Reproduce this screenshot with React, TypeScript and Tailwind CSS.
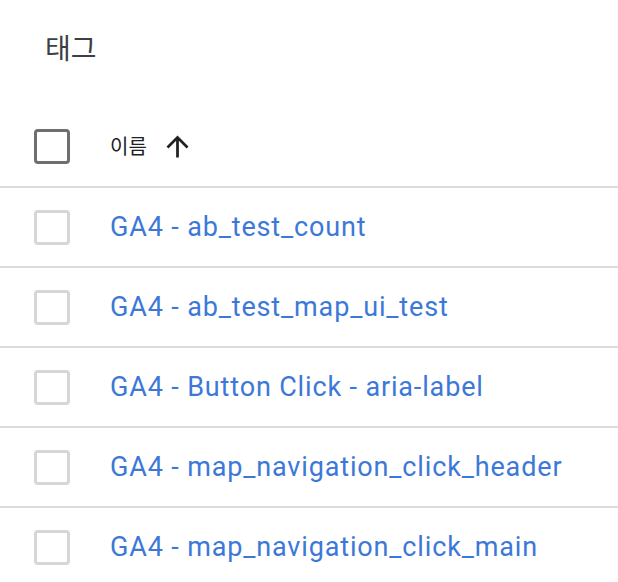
import React from 'react';

const tags = [
  'GA4 - ab_test_count',
  'GA4 - ab_test_map_ui_test',
  'GA4 - Button Click - aria-label',
  'GA4 - map_navigation_click_header',
  'GA4 - map_navigation_click_main',
];

const ArrowUp = () => (
  <svg viewBox="0 0 24 24" className="w-[33px] h-[33px] fill-[#202124]">
    <path d="M4 12l1.41 1.41L11 7.83V20h2V7.83l5.58 5.59L20 12l-8-8-8 8z" />
  </svg>
);

export default function App() {
  return (
    <div className="w-[618px] h-[582px] overflow-hidden bg-white font-['Roboto','Noto_Sans_CJK_KR',sans-serif]">
      {/* Title */}
      <div className="h-[107px] pl-[45px] pt-[30px]">
        <h1 className="text-[28px] leading-[40px] text-[#3c4043]">태그</h1>
      </div>

      {/* Header row */}
      <div className="flex items-center h-[81px] pl-[34px] border-b-2 border-[#dadce0]">
        <div className="w-[36px] h-[35px] rounded-[4px] border-[3px] border-[#6f6f6f]" />
        <div className="ml-[40px] flex items-center gap-[14px]">
          <span className="text-[20px] text-[#202124]">이름</span>
          <ArrowUp />
        </div>
      </div>

      {/* Rows */}
      {tags.map(tag => (
        <div key={tag} className="flex items-center h-[80px] pl-[34px] border-b-2 border-[#dadce0]">
          <div className="w-[36px] h-[35px] rounded-[4px] border-[3px] border-[#d6d6d6]" />
          <span className="ml-[40px] text-[27px] tracking-[0.85px] text-[#3c78d8]">{tag}</span>
        </div>
      ))}
    </div>
  );
}
